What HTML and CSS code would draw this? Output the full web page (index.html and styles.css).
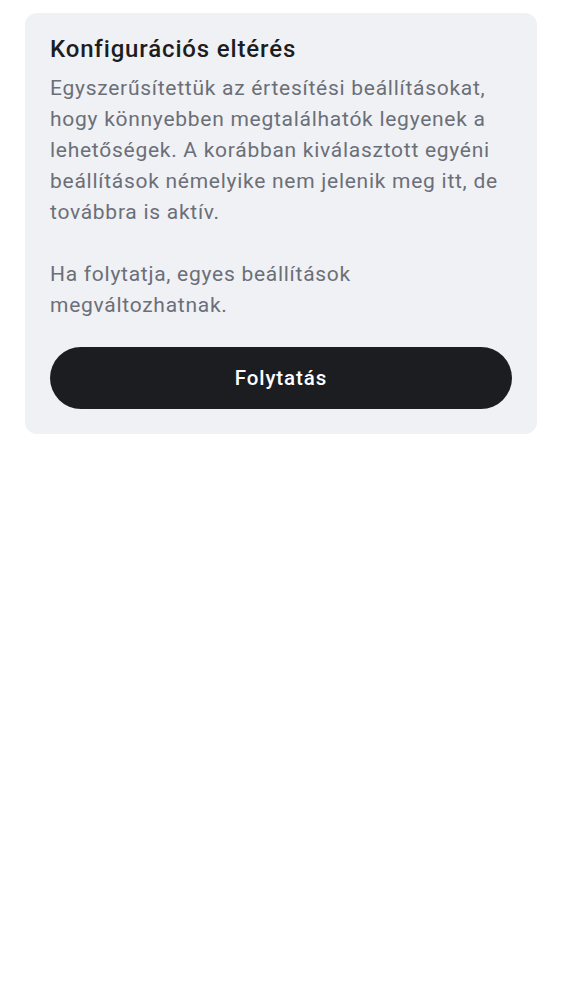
FILE: index.html
```html
<!DOCTYPE html>
<html lang="hu">
<head>
<meta charset="utf-8">
<link rel="stylesheet" href="styles.css">
</head>
<body>
<div class="card">
  <h1 class="title">Konfigurációs eltérés</h1>
  <p class="text">Egyszerűsítettük az értesítési beállításokat, hogy könnyebben megtalálhatók legyenek a lehetőségek. A korábban kiválasztott egyéni beállítások némelyike nem jelenik meg itt, de továbbra is aktív.</p>
  <p class="text gap">Ha folytatja, egyes beállítások megváltozhatnak.</p>
  <button class="btn">Folytatás</button>
</div>
</body>
</html>
```
FILE: styles.css
```css
* { box-sizing: border-box; }
html, body { margin: 0; padding: 0; background: #ffffff; }
body { font-family: Roboto, "Noto Sans", sans-serif; padding: 13px 25px 0; }
.card {
  background: #f0f1f5;
  border-radius: 12px;
  padding: 20px 25px 25px;
  display: flex;
  flex-direction: column;
}
.title {
  margin: 0;
  font-size: 24px;
  font-weight: 500;
  letter-spacing: 0.85px;
  line-height: 32px;
  color: #1c1d21;
}
.text {
  margin: 8px 0 0;
  font-size: 21px;
  letter-spacing: 0.73px;
  line-height: 31px;
  color: #6b6f78;
}
.text.gap { margin-top: 31px; }
.btn {
  margin-top: 26px;
  height: 62px;
  border: none;
  border-radius: 31px;
  background: #1c1d21;
  color: #ffffff;
  font-family: Roboto, "Noto Sans", sans-serif;
  font-size: 20.5px;
  letter-spacing: 0.9px;
  font-weight: 500;
}
```
